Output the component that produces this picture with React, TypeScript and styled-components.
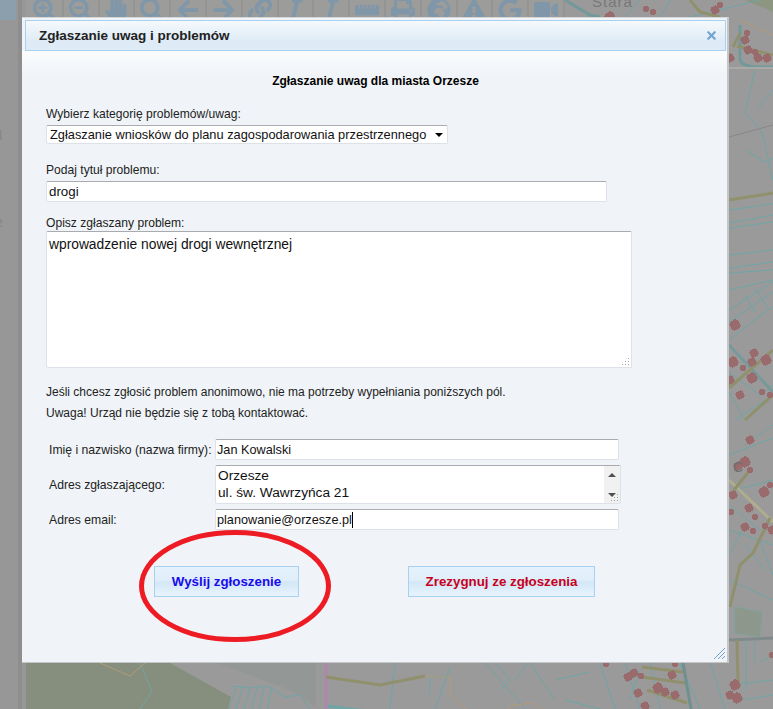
import React from 'react';
import styled, { createGlobalStyle } from 'styled-components';
import {
  FaSearchPlus,
  FaSearchMinus,
  FaHandPaper,
  FaSearch,
  FaArrowLeft,
  FaArrowRight,
  FaLink,
  FaItalic,
  FaRulerHorizontal,
  FaPrint,
  FaGlobeAfrica,
  FaExclamationTriangle,
  FaGoogle,
  FaVideo,
} from 'react-icons/fa';
import { X } from 'lucide-react';

const GlobalStyle = createGlobalStyle`
  html, body {
    margin: 0;
    padding: 0;
    background: #9a9a9a;
  }
  * {
    box-sizing: border-box;
  }
`;

const toolIcons = [
  FaSearchPlus,
  FaSearchMinus,
  FaHandPaper,
  FaSearch,
  FaArrowLeft,
  FaArrowRight,
  FaLink,
  FaItalic,
  FaItalic,
  FaRulerHorizontal,
  FaPrint,
  FaGlobeAfrica,
  FaExclamationTriangle,
  FaGoogle,
  FaVideo,
];

const tealLines = [
  'M745 150L765 162L773 158',
  'M755 70L745 112L762 132L773 180',
  'M773 90L757 110',
  'M729 210L773 204',
  'M729 223L773 215',
  'M729 228L773 222',
  'M729 255L773 250',
  'M729 268L773 262',
  'M729 273L773 270',
  'M729 290L773 280',
  'M729 310L773 282',
  'M729 322L773 292',
  'M729 340L773 306',
  'M745 295L755 312',
  'M755 288L768 308',
  'M729 372L760 395L773 385',
  'M729 392L745 420',
  'M735 420L773 395',
  'M745 445L773 425',
  'M729 455L773 438',
  'M735 490L773 480',
  'M729 505L760 530',
  'M729 530L773 545',
  'M745 545L765 570',
  'M729 555L745 525',
  'M760 540L773 575',
  'M729 580L773 600',
  'M755 640L755 662',
  'M746 640L746 690',
  'M773 655L760 662',
  'M740 700L773 695',
  'M140 663L152 691L140 709',
  'M231 686L250 688L268 686L285 697L300 695L310 709',
  'M236 688L229 709',
  'M243 686L236 709',
  'M250 688L244 709',
  'M257 688L252 709',
  'M264 687L260 709',
  'M271 687L268 709',
  'M395 663L390 709',
  'M450 667L435 709',
  'M430 677L430 695',
  'M430 677L450 677',
  'M485 663L500 680L525 709',
  'M528 663L515 680',
  'M530 663L555 700',
  'M600 663L615 709',
  'M625 663L640 709',
  'M650 663L660 709',
  'M680 663L700 709',
  'M710 663L725 709',
  'M729 685L773 680',
  'M556 680L590 672',
  'M496 664L510 680L500 690',
  'M565 700L600 709',
  'M640 670L630 700',
  'M490 0L520 17',
  'M545 0L560 17',
  'M640 0L625 17',
  'M670 0L660 17',
  'M690 17L760 0',
];

const buildings = [
  [730, 58, 4], [747, 33, 3], [745, 40, 4], [748, 50, 4], [755, 52, 3], [758, 58, 4], [767, 58, 4],
  [735, 325, 5], [754, 353, 4], [752, 362, 4], [733, 362, 5], [743, 368, 3], [766, 360, 5], [730, 380, 4],
  [752, 378, 5], [762, 392, 3], [740, 395, 4], [770, 395, 3],
  [750, 440, 4], [745, 462, 5], [738, 466, 4], [750, 470, 3], [733, 495, 4], [764, 492, 5], [770, 485, 3],
  [749, 508, 4], [731, 512, 3], [755, 517, 3], [745, 527, 4], [753, 531, 3], [765, 526, 3], [772, 530, 4],
  [735, 685, 5], [730, 695, 4], [737, 698, 5], [772, 655, 3],
  [628, 677, 4], [634, 673, 4], [641, 676, 3], [672, 675, 4], [638, 693, 4], [675, 695, 4], [658, 688, 5],
  [665, 692, 4], [645, 706, 4], [606, 664, 3], [675, 664, 3],
  [610, 17, 5], [646, 9, 3], [653, 12, 3], [715, 10, 4], [720, 5, 3],
];

const Page = styled.div`
  position: relative;
  display: flex;
  width: 773px;
  height: 709px;
  overflow: hidden;
  background: #9a9a9a;
  font-family: 'Liberation Sans', Arial, sans-serif;
`;

const Sidebar = styled.aside`
  width: 26px;
  flex-shrink: 0;
  background: linear-gradient(90deg, #979797 0 18px, #8e8e8e 18px 22px, #979797 22px);
  color: #858585;
  font-size: 14px;
  overflow: hidden;
`;

const SidebarTab = styled.div`
  width: 16px;
  height: 20px;
  background: #8ba0ac;
`;

const SidebarGlyph = styled.div<{ $gap: number }>`
  margin: ${(p) => p.$gap}px 0 0 -5px;
  line-height: 14px;
`;

const MapPane = styled.main`
  position: relative;
  flex: 1;
`;

const MapCanvas = styled.svg`
  position: absolute;
  inset: 0;
  width: 100%;
  height: 100%;
`;

const Toolbar = styled.nav`
  position: absolute;
  top: -3px;
  left: 0;
  display: flex;
  height: 26px;
  padding-left: 2px;
  background: #9c9c9b;
`;

const ToolButton = styled.div`
  display: flex;
  width: 35.8px;
  height: 26px;
  align-items: center;
  justify-content: center;
  color: #7f97a8;
  font-size: 24px;
  border-right: 2px solid #949492;
`;

const Dialog = styled.section`
  position: absolute;
  left: 22px;
  top: 17px;
  width: 707px;
  height: 646px;
  background: #f0f4f8;
  border-right: 2px solid #c4c6c8;
  border-bottom: 2px solid #c4c6c8;
  border-top: 1px solid #d4d6d8;
  color: #222;
`;

const TitleBar = styled.header`
  display: flex;
  align-items: center;
  justify-content: space-between;
  height: 31px;
  margin: 2px 1px 0 3px;
  padding: 0 7px 0 13px;
  border: 1px solid #a8d0ef;
  background: linear-gradient(#f5f9fc, #deebf6 70%, #dfecf7);
`;

const Title = styled.h1`
  margin: 0;
  font-size: 13.5px;
  line-height: 16px;
  font-weight: bold;
  color: #222;
`;

const CloseIcon = styled(X)`
  color: #6fa3d1;
`;

const Body = styled.div`
  padding: 23px 24px 0;
  background: linear-gradient(#fbfcfd, #f0f4f8 24px);
  height: 611px;
`;

const Heading = styled.h2`
  margin: 0 0 19px 2px;
  text-align: center;
  font-size: 12px;
  line-height: 14px;
  font-weight: bold;
  color: #000;
`;

const Label = styled.label`
  display: block;
  font-size: 12.1px;
  line-height: 14px;
  margin-bottom: 4px;
  color: #222;
`;

const fieldBorder = `
  border: 1px solid #dde2e8;
  border-top-color: #a9abae;
  border-radius: 2px;
  background: #fff;
  color: #111;
  outline: none;
  font-family: 'Liberation Sans', Arial, sans-serif;
  font-size: 13.33px;
`;

const SelectWrap = styled.div`
  position: relative;
  width: 402px;
  height: 19px;
  margin-bottom: 19px;
  &::after {
    content: '';
    position: absolute;
    right: 5px;
    top: 8px;
    border-left: 4px solid transparent;
    border-right: 4px solid transparent;
    border-top: 4px solid #000;
  }
`;

const Select = styled.select`
  ${fieldBorder}
  display: block;
  width: 100%;
  height: 100%;
  padding: 0 0 0 3px;
  appearance: none;
  line-height: 16px;
  font-size: 12.8px;
`;

const TitleInput = styled.input`
  ${fieldBorder}
  display: block;
  width: 561px;
  height: 21px;
  margin-bottom: 14px;
  padding: 0 2px;
`;

const DescriptionWrap = styled.div`
  position: relative;
  width: 586px;
  height: 137px;
  margin-top: -3px;
  margin-bottom: 14px;
`;

const Textarea = styled.textarea`
  ${fieldBorder}
  display: block;
  width: 100%;
  height: 100%;
  padding: 5px 2px;
  resize: none;
  overflow: hidden;
  line-height: 15px;
  font-size: 13.8px;
`;

const Grip = styled.svg`
  position: absolute;
  right: 2px;
  bottom: 2px;
`;

const Note = styled.p`
  margin: 0;
  font-size: 12px;
  line-height: 21px;
  color: #222;
`;

const FormGrid = styled.div`
  display: grid;
  grid-template-columns: 166px 1fr;
  row-gap: 5px;
  align-items: center;
  margin: 15px 0 0 3px;
`;

const RowLabel = styled.label`
  font-size: 12.2px;
  line-height: 14px;
  color: #222;
  white-space: nowrap;
`;

const RowInput = styled.input`
  ${fieldBorder}
  display: block;
  width: 404px;
  height: 21px;
  padding: 0 1px;
  font-size: 12.7px;
`;

const EmailWrap = styled.div`
  position: relative;
  width: 404px;
`;

const Caret = styled.span`
  position: absolute;
  left: 137px;
  top: 3px;
  width: 1px;
  height: 16px;
  background: #000;
`;

const AddressWrap = styled.div`
  position: relative;
  width: 406px;
  height: 39px;
`;

const AddressText = styled.textarea`
  ${fieldBorder}
  display: block;
  width: 100%;
  height: 100%;
  padding: 1px 2px 0;
  resize: none;
  overflow: hidden;
  line-height: 17px;
  font-size: 13.7px;
`;

const Scrollbar = styled.div`
  position: absolute;
  right: 1px;
  top: 1px;
  bottom: 1px;
  width: 16px;
  display: flex;
  flex-direction: column;
  align-items: center;
  justify-content: space-between;
  padding: 7px 0 6px;
  background: #f1f1f1;
`;

const Arrow = styled.span<{ $down?: boolean }>`
  width: 0;
  height: 0;
  border-left: 4px solid transparent;
  border-right: 4px solid transparent;
  ${(p) => (p.$down ? 'border-top: 4px solid #505050;' : 'border-bottom: 4px solid #505050;')}
`;

const Actions = styled.div`
  display: flex;
  gap: 109px;
  margin: 36px 0 0 108px;
`;

const ActionButton = styled.button<{ $color: string; $width: number }>`
  width: ${(p) => p.$width}px;
  height: 31px;
  padding: 0;
  border: 1px solid #a8d0ef;
  background: linear-gradient(#e5f2fc, #e0eefa 45%, #d3e7f6 52%, #e8f4fd);
  color: ${(p) => p.$color};
  font-family: 'Liberation Sans', Arial, sans-serif;
  font-size: 13.33px;
  font-weight: bold;
`;

const Highlight = styled.svg`
  position: absolute;
  left: 139px;
  top: 530px;
  pointer-events: none;
`;

const ResizeHandle = styled.svg`
  position: absolute;
  right: 2px;
  bottom: 2px;
`;

const GripDots = () => (
  <Grip width="9" height="9" viewBox="0 0 9 9" fill="#a0a0a0">
    <rect x="7" y="1" width="1" height="1" />
    <rect x="7" y="4" width="1" height="1" />
    <rect x="7" y="7" width="1" height="1" />
    <rect x="4" y="4" width="1" height="1" />
    <rect x="4" y="7" width="1" height="1" />
    <rect x="1" y="7" width="1" height="1" />
  </Grip>
);

export default function App() {
  return (
    <Page>
      <GlobalStyle />
      <Sidebar>
        <SidebarTab />
        <SidebarGlyph $gap={108}>4</SidebarGlyph>
        <SidebarGlyph $gap={73}>e</SidebarGlyph>
      </Sidebar>
      <MapPane>
        <MapCanvas viewBox="26 0 747 709">
          <polygon points="26,663 170,663 231,697 228,709 26,709" fill="#868f7d" />
          <polygon points="217,663 316,663 316,707 290,690" fill="#939897" />
          <polygon points="735,607 762,612 760,637 735,633" fill="#8d978c" stroke="#7fa39c" />
          <polygon points="745,0 773,0 773,12" fill="#8c9680" />
          <path d="M729 640L773 638" stroke="#808a8c" strokeWidth="3" fill="none" />
          {tealLines.map((d) => (
            <path key={d} d={d} stroke="#6fa5a6" strokeWidth="1" fill="none" />
          ))}
          <g fill="none">
            <path d="M565 0L590 15L600 17" stroke="#72999a" strokeWidth="3" />
            <path d="M740 25V60Q742 66 755 67H773" stroke="#72999a" strokeWidth="3" />
            <path d="M729 68H773" stroke="#a9a9a6" strokeWidth="2" />
            <path d="M729 345L773 392" stroke="#76999a" strokeWidth="3" />
            <path d="M729 480L773 522" stroke="#b0ac8e" strokeWidth="3" />
            <path d="M683 663L691 709" stroke="#6f9091" strokeWidth="3" />
            <path d="M327 706L430 719L462 742" stroke="#6fa5a6" strokeWidth="3" />
            <path d="M326 663V709" stroke="#b086ad" strokeWidth="3" />
            <path d="M425 677H450V695L482 724L515 705L532 703L560 720L575 735" stroke="#b59a78" />
            <path d="M100 663L130 676L145 663" stroke="#b59a78" />
            <path d="M740 20L773 35" stroke="#b59a78" />
            <path d="M729 137L773 125" stroke="#8b8686" />
            <g stroke="#90916c" strokeWidth="3">
              <path d="M733 47L740 33" />
              <path d="M737 46L773 55" />
              <path d="M729 200L773 193" />
              <path d="M729 388L773 350" />
              <path d="M745 420L773 395" />
              <path d="M730 607L740 565L753 553L770 518" />
              <path d="M737 640L738 683" />
              <path d="M734 490L750 470" />
              <path d="M326 677L380 685L425 676" />
              <path d="M642 667L683 672" />
              <path d="M642 677L685 683" />
              <path d="M647 690L687 703" />
              <path d="M690 0L700 12L720 17" />
            </g>
          </g>
          <g fill="#9a6b6d" shapeRendering="crispEdges">
            {buildings.map(([x, y, r]) => (
              <g key={`${x}-${y}`} transform={`rotate(-30 ${x} ${y})`}>
                <rect x={x - r} y={y - r * 0.7} width={r * 2} height={r * 1.4} />
                <rect x={x - r * 0.7} y={y - r} width={r * 1.4} height={r * 2} />
              </g>
            ))}
          </g>
          <text x="592" y="7" fontSize="15" fill="#777" fontFamily="'Liberation Sans', sans-serif" letterSpacing="1">
            Stara
          </text>
          <text x="733" y="472" fontSize="14" fill="#6f6f6f" fontFamily="'Liberation Sans', sans-serif">
            C
          </text>
        </MapCanvas>
        <Toolbar>
          {toolIcons.map((Icon, i) => (
            <ToolButton key={i}>
              <Icon />
            </ToolButton>
          ))}
        </Toolbar>
      </MapPane>
      <Dialog>
        <TitleBar>
          <Title>Zgłaszanie uwag i problemów</Title>
          <CloseIcon size={13} strokeWidth={4} />
        </TitleBar>
        <Body>
          <Heading>Zgłaszanie uwag dla miasta Orzesze</Heading>
          <Label>Wybierz kategorię problemów/uwag:</Label>
          <SelectWrap>
            <Select defaultValue="plan">
              <option value="plan">Zgłaszanie wniosków do planu zagospodarowania przestrzennego</option>
            </Select>
          </SelectWrap>
          <Label>Podaj tytuł problemu:</Label>
          <TitleInput defaultValue="drogi" />
          <Label>Opisz zgłaszany problem:</Label>
          <DescriptionWrap>
            <Textarea defaultValue="wprowadzenie nowej drogi wewnętrznej" />
            <GripDots />
          </DescriptionWrap>
          <Note>Jeśli chcesz zgłosić problem anonimowo, nie ma potrzeby wypełniania poniższych pól.</Note>
          <Note>Uwaga! Urząd nie będzie się z tobą kontaktować.</Note>
          <FormGrid>
            <RowLabel>Imię i nazwisko (nazwa firmy):</RowLabel>
            <RowInput defaultValue="Jan Kowalski" />
            <RowLabel>Adres zgłaszającego:</RowLabel>
            <AddressWrap>
              <AddressText defaultValue={'Orzesze\nul. św. Wawrzyńca 21'} />
              <Scrollbar>
                <Arrow />
                <Arrow $down />
              </Scrollbar>
              <GripDots />
            </AddressWrap>
            <RowLabel>Adres email:</RowLabel>
            <EmailWrap>
              <RowInput defaultValue="planowanie@orzesze.pl" />
              <Caret />
            </EmailWrap>
          </FormGrid>
          <Actions>
            <ActionButton $color="#1a0aee" $width={145}>
              Wyślij zgłoszenie
            </ActionButton>
            <ActionButton $color="#c8001e" $width={187}>
              Zrezygnuj ze zgłoszenia
            </ActionButton>
          </Actions>
        </Body>
        <ResizeHandle width="12" height="12" viewBox="0 0 12 12" stroke="#6fa3d1" strokeWidth="1">
          <path d="M1 12L12 1M5 12L12 5M9 12L12 9" />
        </ResizeHandle>
      </Dialog>
      <Highlight width="192" height="112" viewBox="0 0 192 112">
        <ellipse cx="96" cy="56" rx="93.5" ry="53.5" fill="none" stroke="#ed1c24" strokeWidth="5" />
      </Highlight>
    </Page>
  );
}
